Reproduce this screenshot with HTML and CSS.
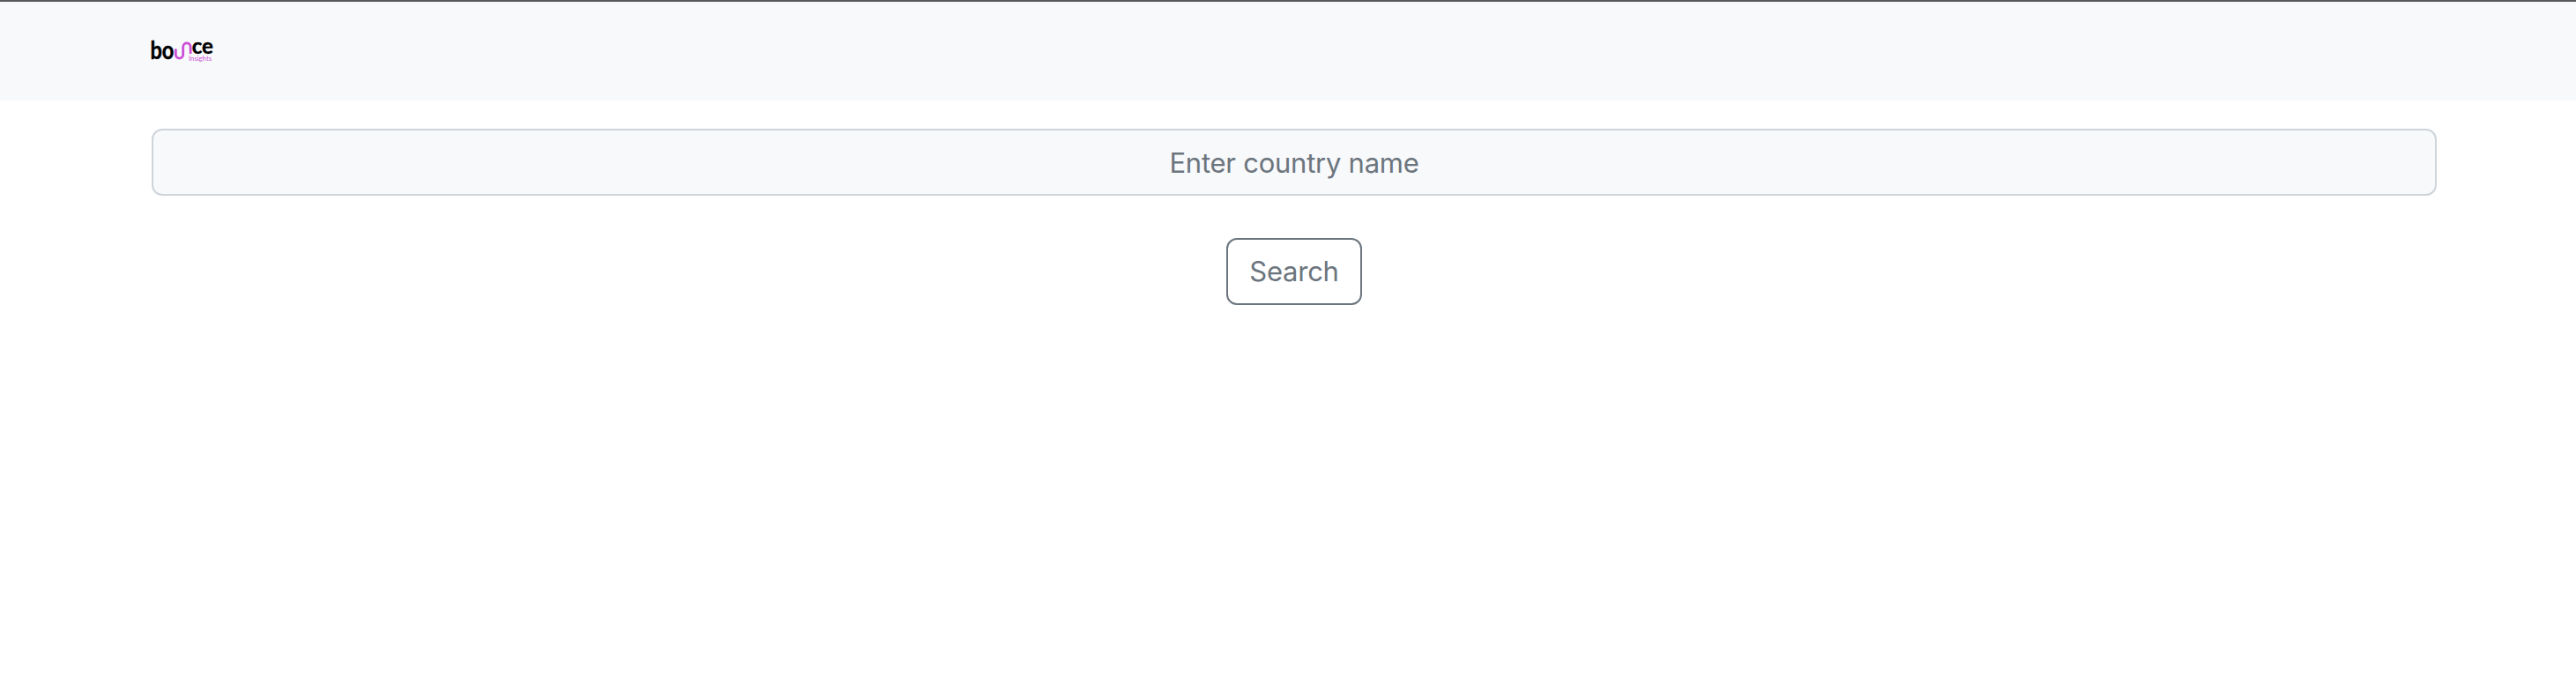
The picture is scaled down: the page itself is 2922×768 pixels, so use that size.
FILE: index.html
```
<!DOCTYPE html>
<html lang="en">
<head>
<meta charset="utf-8">
<title>Bounce Insights</title>
<link rel="stylesheet" href="styles.css">
</head>
<body>
<header class="navbar">
  <a class="brand" aria-label="Bounce Insights">
    <svg class="logo" width="72" height="30" viewBox="0 0 72 30">
      <text class="logo-word logo-start" x="-1.6" y="23.2" textLength="27" lengthAdjust="spacingAndGlyphs">bo</text>
      <path class="logo-wave" d="M27.3 11.5v6.2c0 5.8 8.4 5.8 8.4 0V9.3c0-5.8 8.4-5.8 8.4 0V17"/>
      <text class="logo-word logo-end" x="45.7" y="16.6" textLength="24.2" lengthAdjust="spacingAndGlyphs">ce</text>
      <text class="logo-tag" x="42" y="24.6" textLength="26" lengthAdjust="spacingAndGlyphs">Insights</text>
    </svg>
  </a>
</header>
<main class="search">
  <input class="country" type="text" placeholder="Enter country name">
  <button class="submit" type="button">Search</button>
</main>
</body>
</html>
```
FILE: styles.css
```
* { box-sizing: border-box; }
body { margin: 0; background: #fff; font-family: Inter, sans-serif; }
.navbar {
  display: flex;
  height: 114px;
  padding: 42px 172px 0;
  border-top: 2px solid #59595b;
  background: #f8f9fb;
}
.brand, .logo { display: block; height: 30px; }
.logo { overflow: visible; }
.logo-word { font-family: Lato, sans-serif; font-weight: 700; fill: #000; stroke: #000; stroke-width: .4; }
.logo-start { font-size: 28px; }
.logo-end { font-size: 24px; }
.logo-wave { fill: none; stroke: #cc4fd6; stroke-width: 2.8; }
.logo-tag { font: 400 8.3px Lato, sans-serif; fill: #cc4fd6; }
.search {
  display: flex;
  flex-direction: column;
  align-items: center;
  gap: 48px;
  padding: 32px 158px 0 172px;
}
.country, .submit {
  height: 76px;
  border-radius: 12px;
  font: 400 31px/48px Inter, sans-serif;
  letter-spacing: -.25px;
  text-align: center;
}
.country {
  width: 100%;
  padding: 12px 24px;
  border: 2px solid #ced4da;
  background: #f8f9fb;
  color: #212529;
}
.country::placeholder { color: #6c757d; opacity: 1; }
.submit {
  width: 154px;
  padding: 12px 0;
  border: 2px solid #6c757d;
  background: transparent;
  color: #6c757d;
}
```
